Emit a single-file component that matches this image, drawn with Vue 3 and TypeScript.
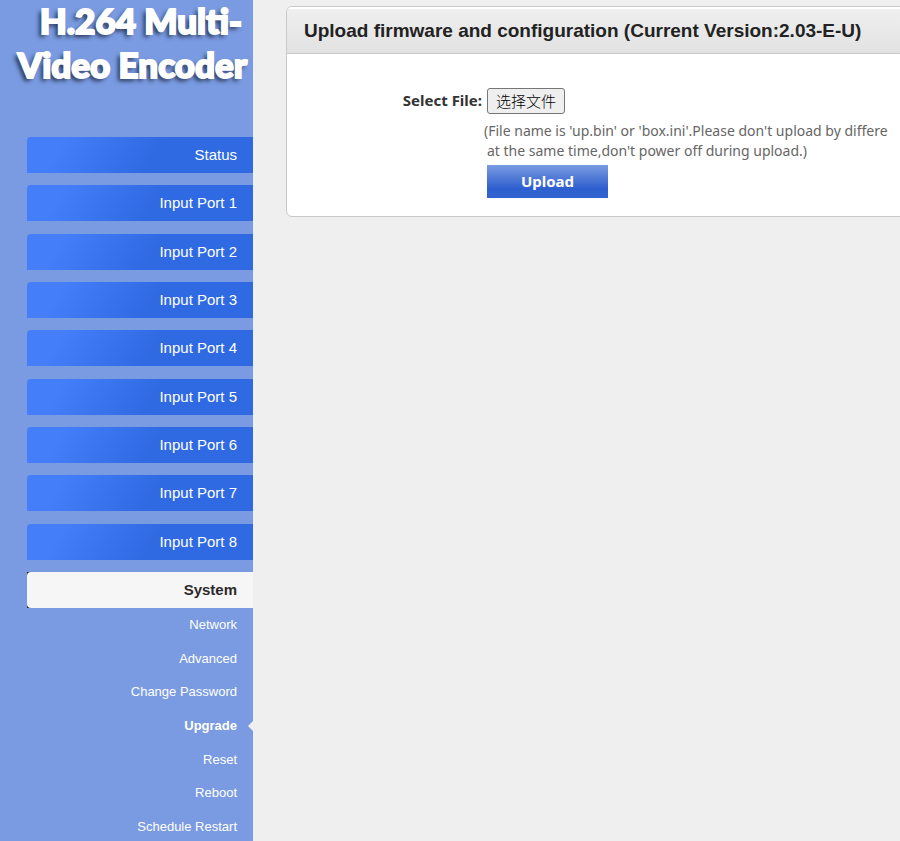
<script setup lang="ts">
import { ref } from 'vue'

interface Entry {
  label: string
  slug: string
}

const ports: Entry[] = Array.from({ length: 8 }, (_, i) => ({
  label: `Input Port ${i + 1}`,
  slug: `port-${i + 1}`,
}))
const sections: Entry[] = [{ label: 'Status', slug: 'status' }, ...ports, { label: 'System', slug: 'system' }]
const pages: Entry[] = [
  { label: 'Network', slug: 'network' },
  { label: 'Advanced', slug: 'advanced' },
  { label: 'Change Password', slug: 'password' },
  { label: 'Upgrade', slug: 'upgrade' },
  { label: 'Reset', slug: 'reset' },
  { label: 'Reboot', slug: 'reboot' },
  { label: 'Schedule Restart', slug: 'schedule' },
]

const section = ref('system')
const page = ref('upgrade')
const fileInput = ref<HTMLInputElement | null>(null)

function chooseFile(): void {
  fileInput.value?.click()
}
</script>

<template>
  <div class="shell">
    <aside class="sidebar">
      <h1 class="brand"><span class="brand-lead">H.264 Multi-</span><span>Video Encoder</span></h1>
      <nav>
        <ul class="sections">
          <li v-for="item in sections" :key="item.slug" :class="{ open: section === item.slug }">
            <a
              class="section"
              :class="{ current: section === item.slug }"
              :href="`#${item.slug}`"
              @click.prevent="section = item.slug"
            >{{ item.label }}</a>
          </li>
        </ul>
        <ul class="pages">
          <li v-for="item in pages" :key="item.slug" class="page-row">
            <a
              class="page"
              :class="{ current: page === item.slug }"
              :href="`#${item.slug}`"
              @click.prevent="page = item.slug"
            >{{ item.label }}</a>
          </li>
        </ul>
      </nav>
    </aside>

    <main class="content">
      <section class="panel">
        <h2 class="panel-title">Upload firmware and configuration (Current Version:2.03-E-U)</h2>
        <form class="form" @submit.prevent>
          <label class="field-label" for="file-button">Select File:</label>
          <div class="field">
            <button id="file-button" class="file-button" type="button" @click="chooseFile">选择文件</button>
            <input ref="fileInput" type="file" hidden />
            <p class="hint"><span class="hint-first">(File name is 'up.bin' or 'box.ini'.Please don't upload by differe</span><br />at the same time,don't power off during upload.)</p>
            <button class="upload" type="submit">Upload</button>
          </div>
        </form>
      </section>
    </main>
  </div>
</template>

<style>
body {
  margin: 0;
  background: #efefef;
}
</style>

<style scoped>
.shell {
  display: flex;
  height: 100vh;
  overflow: hidden;
  background: #efefef;
  font-family: "Liberation Sans", Arial, sans-serif;
}

.sidebar {
  flex: 0 0 253px;
  background: #7a9be1;
}

.brand {
  display: flex;
  flex-direction: column;
  height: 139px;
  margin: -2px 0 0;
  padding-right: 6px;
  box-sizing: border-box;
  text-align: right;
  font-family: Lato, "Open Sans", sans-serif;
  font-size: 35px;
  font-weight: 900;
  line-height: 44px;
  white-space: nowrap;
  color: #fff;
  -webkit-text-stroke: 2px #fff;
  text-shadow: -3px 3px 4px #26324f;
}

.brand-lead {
  padding-right: 5px;
}

.sections,
.pages {
  display: flex;
  flex-direction: column;
  margin: 0;
  padding: 0;
  list-style: none;
}

.sections {
  justify-content: space-between;
  min-height: 471px;
  padding-left: 27px;
}

.open {
  background: #1c2433;
}

.section {
  display: block;
  padding-right: 16px;
  border-radius: 4px 0 0 0;
  background: linear-gradient(120deg, #447ff9 15%, #2f6ae3 56%);
  font-size: 15px;
  line-height: 36px;
  text-align: right;
  text-decoration: none;
  color: #fff;
}

.section.current {
  border-radius: 4px 0 0 4px;
  background: #f6f6f6;
  font-weight: 700;
  color: #2b2b2b;
}

.pages {
  min-height: 235px;
}

.page-row {
  display: flex;
  flex: 1;
}

.page {
  position: relative;
  display: flex;
  flex: 1;
  align-items: center;
  justify-content: flex-end;
  padding-right: 16px;
  font-size: 13px;
  text-decoration: none;
  color: #fff;
}

.page.current {
  font-weight: 700;
}

.page.current::after {
  content: "";
  position: absolute;
  right: 0;
  border: 5px solid transparent;
  border-left-width: 0;
  border-right-color: #efefef;
}

.content {
  flex: 1;
  min-width: 0;
  padding: 6px 0 0 33px;
  overflow: hidden;
}

.panel {
  min-width: 900px;
  border: 1px solid #c8c8c8;
  border-radius: 6px;
  background: #fff;
  overflow: hidden;
}

.panel-title {
  margin: 0;
  padding: 0 17px;
  border-bottom: 1px solid #c8c8c8;
  border-top: 2px solid #fff;
  background: linear-gradient(#efefef, #e2e2e2);
  font-size: 19px;
  font-weight: 700;
  line-height: 44px;
  white-space: nowrap;
  color: #222;
}

.form {
  display: grid;
  grid-template-columns: 195px 1fr;
  column-gap: 5px;
  padding: 34px 0 18px;
  font-family: "Noto Sans", "Noto Sans CJK SC", sans-serif;
  font-size: 15px;
}

.field-label {
  line-height: 24px;
  text-align: right;
  font-weight: 700;
  color: #333;
}

.field {
  display: flex;
  flex-direction: column;
  align-items: flex-start;
}

.file-button {
  height: 26px;
  padding: 0 8px;
  border: 1px solid #767676;
  border-radius: 3px;
  background: #efefef;
  font-family: "Noto Sans CJK SC", sans-serif;
  font-size: 15px;
  font-weight: 300;
  line-height: 24px;
  color: #000;
}

.hint {
  margin: 7px 0 4px;
  font-size: 14px;
  line-height: 20px;
  white-space: nowrap;
  color: #666;
}

.hint-first {
  margin-left: -3px;
}

.upload {
  width: 121px;
  height: 33px;
  padding: 0 0 2px;
  border: 0;
  background: linear-gradient(#7a9be1 0, #2b5ccf 75%, #3062d0 76%);
  font-family: inherit;
  font-size: 15px;
  font-weight: 700;
  color: #fff;
}
</style>
